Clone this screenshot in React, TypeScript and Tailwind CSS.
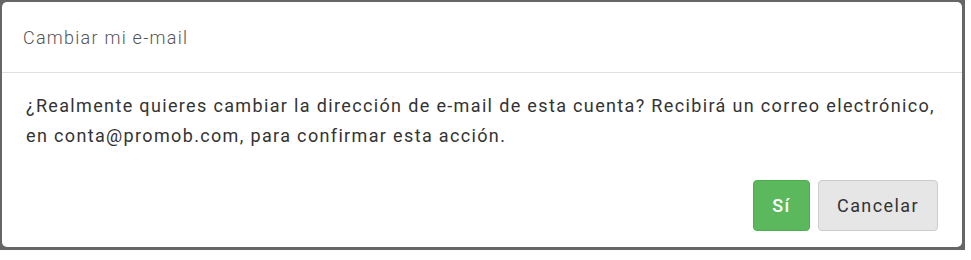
import React from 'react';

export default function App() {
  return (
    <div
      className="w-[971px] h-[260px] bg-white tracking-[1.4px]"
      style={{ fontFamily: 'Roboto, "Liberation Sans", sans-serif' }}
    >
      <div className="w-[965px] h-[250px] bg-[#666666] pl-[2px] pt-[2px]">
        <div className="w-[960px] h-[245px] bg-white rounded-[5px] flex flex-col">
          <div className="h-[71px] border-b border-[#e0e0e0] px-[21px] flex items-center">
            <h4 className="text-[18px] font-light text-[#555] tracking-[1.25px]">Cambiar mi e-mail</h4>
          </div>
          <div className="pl-[24px] pr-[10px] pt-[18px] pb-[29px] text-[18px] leading-[30px] text-[#333] tracking-[1.35px]">
            <p className="whitespace-nowrap">
              ¿Realmente quieres cambiar la dirección de e-mail de esta cuenta? Recibirá un correo electrónico,
              <br />
              en conta@promob.com, para confirmar esta acción.
            </p>
          </div>
          <div className="flex justify-end gap-[8px] px-[24px]">
            <button className="w-[57px] h-[51px] rounded-[4px] bg-[#5cb85c] border border-[#4cae4c] text-white text-[18px] font-medium">
              Sí
            </button>
            <button className="w-[120px] h-[51px] rounded-[4px] bg-[#e6e6e6] border border-[#cccccc] text-[#333] text-[18px]">
              Cancelar
            </button>
          </div>
        </div>
      </div>
    </div>
  );
}
